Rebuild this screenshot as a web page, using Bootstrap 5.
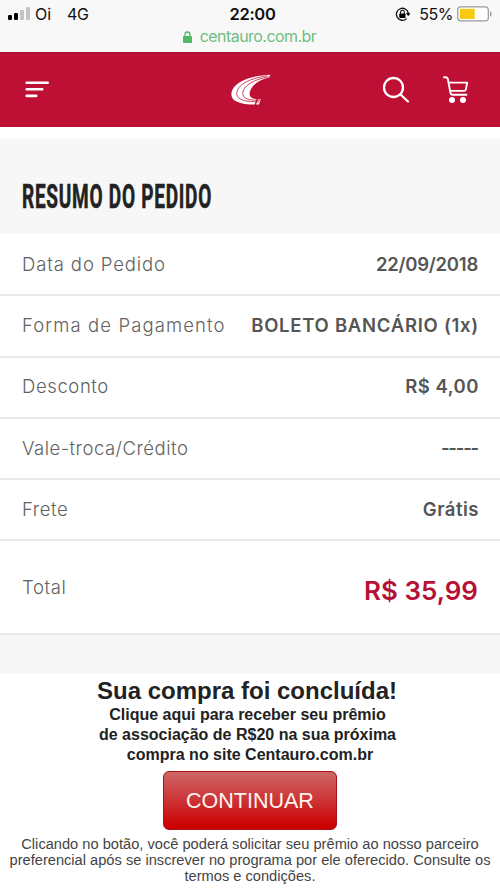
<!DOCTYPE html>
<html lang="pt-BR">
<head>
<meta charset="utf-8">
<meta name="viewport" content="width=device-width, initial-scale=1">
<title>Centauro - Resumo do pedido</title>
<link href="https://cdn.jsdelivr.net/npm/bootstrap@5.3.0/dist/css/bootstrap.min.css" rel="stylesheet">
<style>
body{font-family:Inter,sans-serif;background:#fff;overflow:hidden;color:#222}
svg{display:block;flex:none}
.phone-head{height:52px;background:#f8f8f8;color:#111}
.status-line{height:27px;font-size:16px;line-height:28px;display:grid;grid-template-columns:1fr auto 1fr;padding:0 8px 0 7px}
.clock{font-weight:600;font-size:16.5px;letter-spacing:-.3px;padding-left:6px}
.address{height:19px;line-height:19px;font-size:16px;letter-spacing:-.55px;color:#70bd80;padding-right:1px}
.battery-text{letter-spacing:-.5px}
.shop-bar{height:75px;background:#be0f34;border-top:1px solid #a80e30;display:grid;grid-template-columns:1fr auto 1fr;padding:0 31px 0 25px}
.club-logo{margin-left:7px}
.cart-icon{margin-left:33px}
.heading-band{height:95px;margin-top:12px;background:#f7f7f7;padding:37px 22px 0}
.heading-band h1{font:700 34px/40px Roboto,sans-serif;color:#222;white-space:nowrap;transform:scaleX(.56);transform-origin:left;letter-spacing:1.3px;-webkit-text-stroke:.6px #222;margin:0}
.order-list{padding-top:1px}
.order-row{height:61.25px;border-bottom:2px solid #e9e9e9;padding:0 22px;font-size:18.5px}
.order-row dt{font-weight:300;color:#626262;letter-spacing:.88px}
.order-row dd{font-weight:600;color:#555;margin:0}
.order-row .ls-pay{letter-spacing:1.1px}
.order-row .ls-mid{letter-spacing:.6px}
.order-row .ls-low{letter-spacing:.5px}
.order-row .v-date{letter-spacing:-.25px}
.order-row .v-wide{letter-spacing:.73px;margin-right:-1px}
.order-row .v-mid{letter-spacing:.5px;margin-right:-1px}
.order-row .v-dash{letter-spacing:-1.2px}
.total-row{height:93.3px}
.total-row dt{padding-top:1px}
.total-row dd{font-size:26px;color:#b60f38;padding-top:8px}
.spacer-band{height:39.5px;background:#f7f7f7}
.offer{font-family:"Liberation Sans",Arial,sans-serif;padding-top:2px}
.offer h2{font-size:24px;line-height:30px;font-weight:700;margin:0;padding-right:6px}
.offer-copy{font-size:16px;line-height:20px;font-weight:700;margin:-1px 5px 0 0}
.offer-copy .site-line{padding-left:5px}
.btn-go{width:174px;height:59px;margin-top:6px;border:1px solid #a91018;border-radius:6px;background:linear-gradient(#cd6666,#cc3336 50%,#cc0000 95%);color:#fff3ed;font-size:21.5px;padding:2px 0 0}
.btn-go:hover{color:#fff}
.terms{font-size:14.65px;line-height:16px;color:#444;margin:6px 0 0;white-space:nowrap}
</style>
</head>
<body>
<header>
  <div class="phone-head">
    <div class="status-line">
      <div class="d-flex align-items-center">
        <svg width="24" height="14" viewBox="0 0 24 14"><rect x="1" y="8" width="4" height="5" rx="1.2"/><rect x="7" y="6" width="4" height="7" rx="1.2"/><rect x="13" y="3" width="4" height="10" rx="1.2" fill="#c4c4c4"/><rect x="19" y="0" width="4" height="13" rx="1.2" fill="#c4c4c4"/></svg>
        <span class="ms-1">Oi</span><span class="ms-3 battery-text ps-0">4G</span>
      </div>
      <div class="clock">22:00</div>
      <div class="d-flex align-items-center justify-content-end">
        <svg width="16" height="15" viewBox="0 0 16 15"><path d="M11.6 11.6A6 6 0 1 1 13.3 6" fill="none" stroke="#111" stroke-width="1.3"/><path d="M11 6h4.400l-2.200 3.200z"/><rect x="4.300" y="6.500" width="6.200" height="4.600" rx=".7"/><path d="M5.500 7V5.200a1.900 1.900 0 0 1 3.800 0V7" fill="none" stroke="#111" stroke-width="1.100"/></svg>
        <span class="ms-2 me-1 battery-text">55%</span>
        <svg width="35" height="16" viewBox="0 0 35 16"><rect x=".7" y=".9" width="30.600" height="14" rx="3.200" fill="#fff" stroke="#999" stroke-width="1.200"/><rect x="2.700" y="2.800" width="15" height="10.200" rx="1" fill="#f7cb13"/><path d="M33 5.200c2 .7 2 4.700 0 5.400z" fill="#999"/></svg>
      </div>
    </div>
    <div class="address d-flex justify-content-center align-items-center"><svg class="me-2" width="9" height="12" viewBox="0 0 9 12"><rect y="5" width="9" height="7" rx="1" fill="#4fb963"/><path d="M2 6V3.500a2.500 2.500 0 0 1 5 0V6" fill="none" stroke="#4fb963" stroke-width="1.300"/></svg><span>centauro.com.br</span></div>
  </div>
  <nav class="shop-bar align-items-center">
    <svg width="25" height="18" viewBox="0 0 25 18" stroke="#fff" stroke-width="2.600" stroke-linecap="round"><path d="M1.700 1.800h21M1.700 8.300h15.600M1.700 14.900h9.500"/></svg>
    <svg class="club-logo" width="40" height="32" viewBox="0 0 40 32"><path d="M39.500 .8C21 1.500 3 7 .5 18.500C-.8 26.500 7 30.800 28 30.500L29.700 25.300C19.500 25.800 17 22 19.500 16C22 10 29 5.500 38 3.500Z" fill="#fff"/><path d="M36 1.900C18 4.500 5.800 11 5.800 19.500c0 5.700 6.500 8.300 22.500 8.400M37.500 2.800C21 6 11.800 12.500 11.800 19.500c0 4.800 5 7 17 6.800" fill="none" stroke="#be0f34" stroke-width=".8"/><path d="m26.300 24.500-2 6.500" stroke="#be0f34" stroke-width="1.300"/></svg>
    <div class="d-flex justify-content-end align-items-center">
      <svg width="28" height="28" viewBox="0 0 28 28" fill="none" stroke="#fff" stroke-width="2.300" stroke-linecap="round"><circle cx="11.500" cy="11.500" r="9.500"/><path d="m18.500 18.500 7.500 7"/></svg>
      <svg class="cart-icon" width="26" height="28" viewBox="0 0 26 28" fill="none" stroke="#fff" stroke-width="1.900" stroke-linecap="round" stroke-linejoin="round"><path d="M1 1.200h1.500q1.800 0 2.300 1.600L7.400 16.500q.5 2.300 2.400 2.300h13.700M5.600 6.600h18.600l-1.300 6.800q-.3 1.500-2 1.500H7.300"/><circle cx="9" cy="24" r="3" fill="#fff" stroke="none"/><circle cx="20" cy="24" r="3" fill="#fff" stroke="none"/></svg>
    </div>
  </nav>
</header>
<main>
  <div class="heading-band"><h1>RESUMO DO PEDIDO</h1></div>
  <dl class="order-list m-0">
    <div class="order-row d-flex justify-content-between align-items-center"><dt>Data do Pedido</dt><dd class="v-date">22/09/2018</dd></div>
    <div class="order-row d-flex justify-content-between align-items-center"><dt class="ls-pay">Forma de Pagamento</dt><dd class="v-wide">BOLETO BANCÁRIO (1x)</dd></div>
    <div class="order-row d-flex justify-content-between align-items-center"><dt class="ls-mid">Desconto</dt><dd class="v-mid">R$ 4,00</dd></div>
    <div class="order-row d-flex justify-content-between align-items-center"><dt class="ls-low">Vale-troca/Crédito</dt><dd class="v-dash">-----</dd></div>
    <div class="order-row d-flex justify-content-between align-items-center"><dt class="ls-mid">Frete</dt><dd class="v-mid">Grátis</dd></div>
    <div class="order-row total-row d-flex justify-content-between align-items-center"><dt class="ls-mid">Total</dt><dd>R$ 35,99</dd></div>
  </dl>
  <div class="spacer-band"></div>
  <section class="offer text-center">
    <h2>Sua compra foi concluída!</h2>
    <p class="offer-copy">Clique aqui para receber seu prêmio<br>de associação de R$20 na sua próxima<br><span class="site-line">compra no site Centauro.com.br</span></p>
    <button class="btn btn-go" type="button">CONTINUAR</button>
    <p class="terms">Clicando no botão, você poderá solicitar seu prêmio ao nosso parceiro<br>preferencial após se inscrever no programa por ele oferecido. Consulte os<br>termos e condições.</p>
  </section>
</main>
<script src="https://cdn.jsdelivr.net/npm/bootstrap@5.3.0/dist/js/bootstrap.bundle.min.js"></script>
</body>
</html>
